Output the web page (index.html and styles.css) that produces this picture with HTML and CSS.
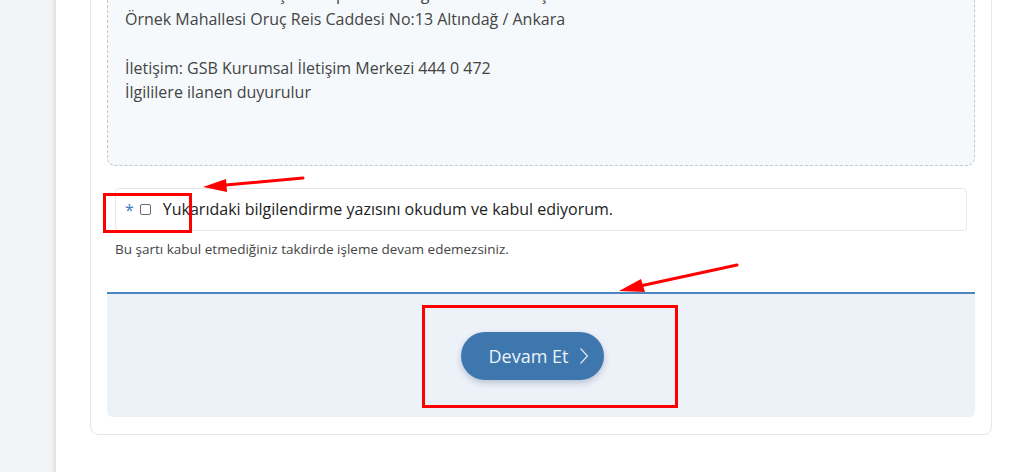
FILE: index.html
```html
<!DOCTYPE html>
<html lang="tr">
<head>
    <meta charset="UTF-8">
    <meta name="viewport" content="width=device-width, initial-scale=1.0">
    <title>Aydınlatma Metni</title>
    <link rel="stylesheet" href="styles.css">
</head>

<body>
<div class="layout">
    <div class="sidebar"></div>

    <div class="main">
        <div class="card">
            <!-- bilgilendirme metni -->
            <div class="notice">
                <p>Veri Sorumlusu: Gençlik ve Spor Bakanlığı Kurumsal İletişim Birimi</p>
                <p>Örnek Mahallesi Oruç Reis Caddesi No:13 Altındağ / Ankara</p>
                <p>&nbsp;</p>
                <p>İletişim: GSB Kurumsal İletişim Merkezi 444 0 472</p>
                <p>İlgililere ilanen duyurulur</p>
            </div>

            <!-- onay kutusu -->
            <div class="form-group">
                <label class="check-row">
                    <span class="required">*</span>
                    <input type="checkbox" class="check">
                    <span class="check-label">Yukarıdaki bilgilendirme yazısını okudum ve kabul ediyorum.</span>
                </label>
                <div class="help-text">Bu şartı kabul etmediğiniz takdirde işleme devam edemezsiniz.</div>
            </div>

            <div class="form-footer">
                <button class="btn-next">Devam Et
                    <svg width="10" height="18" viewBox="0 0 10 18"><path d="M1.5 1.5 L8.5 9 L1.5 16.5" fill="none" stroke="#dfe8f3" stroke-width="1.2"/></svg>
                </button>
            </div>
        </div>
    </div>
</div>

<!-- işaretlemeler -->
<div class="mark mark-check"></div>
<div class="mark mark-button"></div>
<svg class="arrows" width="1024" height="472" viewBox="0 0 1024 472">
    <line x1="303" y1="178" x2="220" y2="185.5" stroke="#ff0000" stroke-width="3" stroke-linecap="round"/>
    <polygon points="203,187 226,179 227,192" fill="#ff0000"/>
    <line x1="737" y1="265" x2="640" y2="286" stroke="#ff0000" stroke-width="3" stroke-linecap="round"/>
    <polygon points="619,291 641,279 645,292" fill="#ff0000"/>
</svg>
</body>
</html>
```

FILE: styles.css
```css
* {
    box-sizing: border-box;
    margin: 0;
    padding: 0;
}

body {
    font-family: 'Open Sans', 'Noto Sans', sans-serif;
    background: #ffffff;
    color: #3f3f3f;
    height: 472px;
    overflow: hidden;
    position: relative;
}

.layout {
    display: flex;
    height: 100%;
}

.sidebar {
    width: 56px;
    flex-shrink: 0;
    background: #f3f4f6;
    box-shadow: inset -4px 0 5px -3px rgba(0, 0, 0, 0.12);
}

.main {
    flex: 1;
    padding: 0 32px 0 34px;
}

.card {
    margin-top: -24px;
    background: white;
    border: 1px solid #e4e6e9;
    border-radius: 8px;
    padding: 0 16px 17px;
}

/* bilgilendirme kutusu */
.notice {
    background: #f5f9fc;
    border: 1px dashed #c4c8cd;
    border-top: none;
    border-radius: 0 0 8px 8px;
    padding: 5px 17px 60px;
    font-size: 16px;
    line-height: 24.5px;
    color: #444;
}

.form-group {
    margin: 22px 8px 0 8px;
}

.check-row {
    display: flex;
    align-items: center;
    height: 43px;
    border: 1px solid #e6e8eb;
    border-radius: 4px;
    padding-left: 9px;
}

.required {
    color: #3a7ab8;
    font-size: 16px;
    margin-right: 6px;
    position: relative;
    top: 1px;
}

.check {
    appearance: none;
    width: 11px;
    height: 11px;
    border: 1px solid #6b6b6b;
    border-radius: 2px;
    margin-right: 12px;
    background: white;
}

.check-label {
    font-size: 16px;
    color: #222;
}

.help-text {
    font-size: 13.5px;
    color: #444;
    margin-top: 9px;
    line-height: 18px;
}

/* alt bölüm */
.form-footer {
    margin-top: 34px;
    background: #edf1f8;
    border-top: 2px solid #4a86bf;
    border-radius: 0 0 6px 6px;
    padding: 38px 0 37px;
    display: flex;
    justify-content: center;
}

.btn-next {
    display: flex;
    align-items: center;
    gap: 11px;
    height: 48px;
    padding: 0 15px 0 28px;
    margin-right: 17px;
    background: #3d77ae;
    color: #eef3f9;
    border: none;
    border-radius: 24px;
    font-family: inherit;
    font-size: 18px;
    box-shadow: 0 3px 6px rgba(30, 60, 100, 0.25);
}

/* kırmızı işaretler */
.mark {
    position: absolute;
    border: 3px solid #ff0000;
}

.mark-check {
    left: 103px;
    top: 193px;
    width: 89px;
    height: 40px;
}

.mark-button {
    left: 422px;
    top: 305px;
    width: 256px;
    height: 103px;
}

.arrows {
    position: absolute;
    left: 0;
    top: 0;
}
```
